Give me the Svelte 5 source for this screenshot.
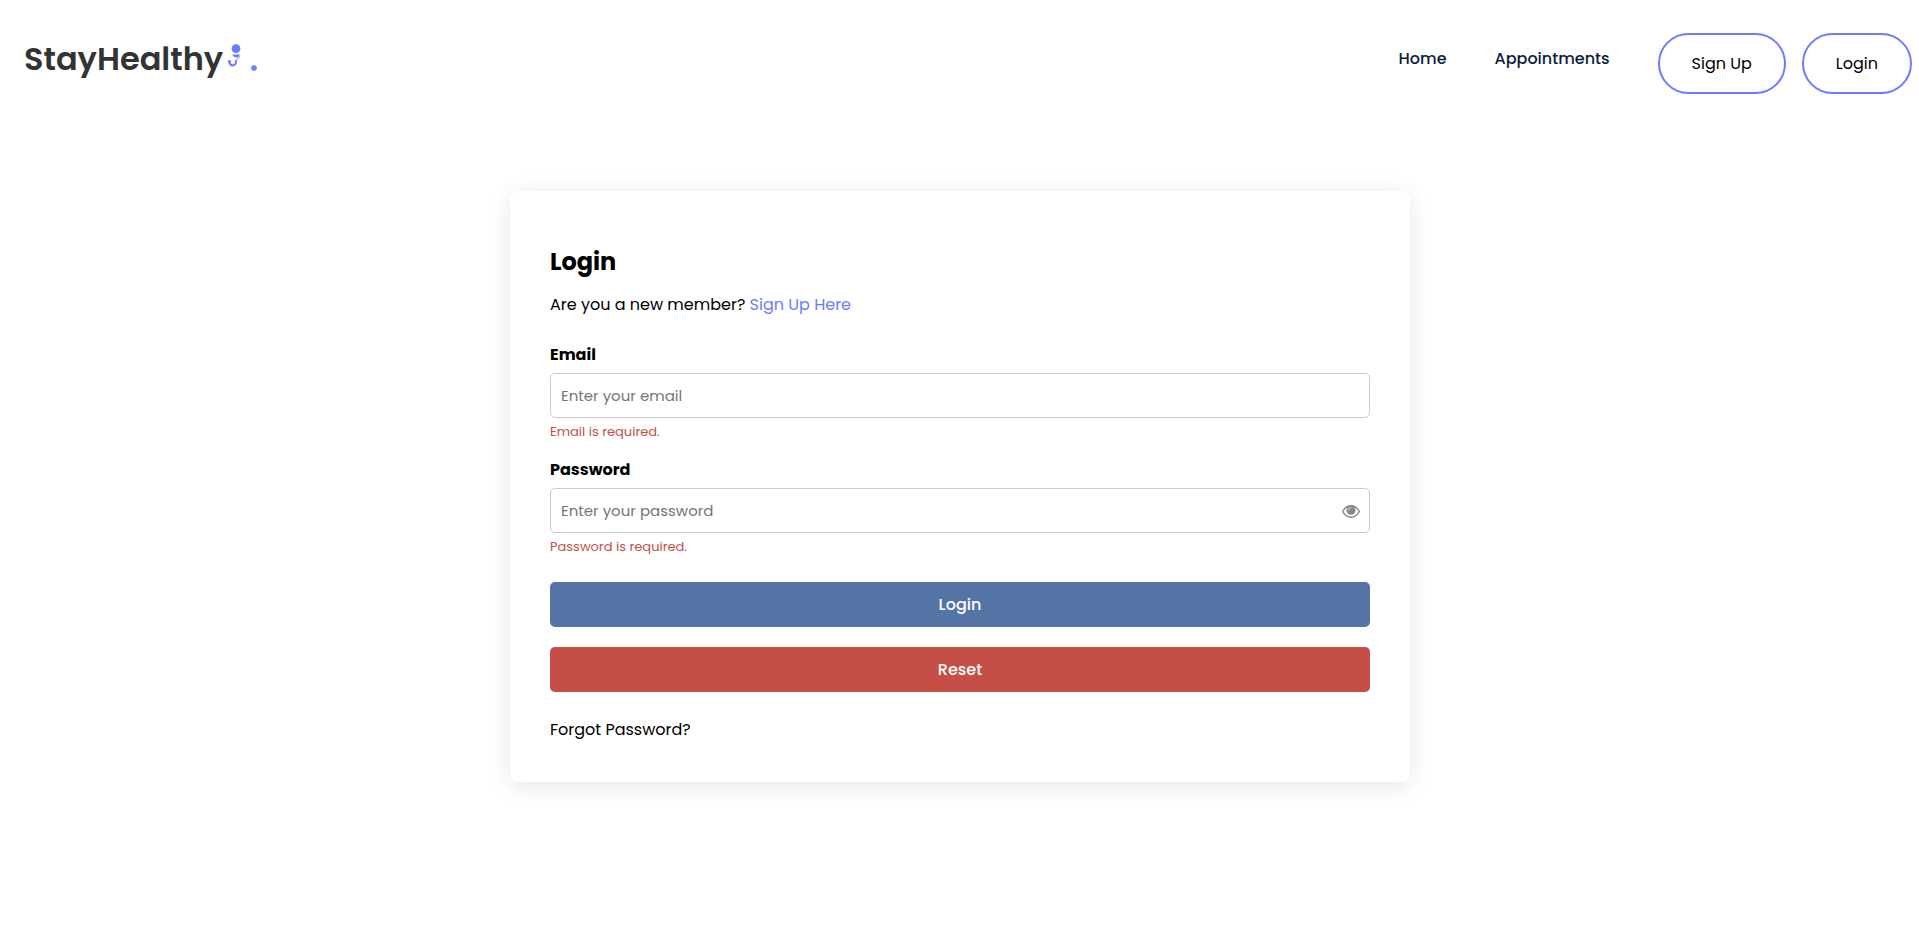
<script>
  let email = $state('');
  let password = $state('');
</script>

<div class="page">
  <header>
    <a class="logo" href="#home">
      <span class="brand">StayHealthy</span>
      <svg class="doctor" width="14" height="26" viewBox="0 0 14 26" aria-hidden="true">
        <circle cx="9" cy="4.7" r="4.4" fill="#6b7cff" />
        <path d="M5.200 10.600h7.800l-1.500 2.100q-2.300 1-4.600 0z" fill="#6b7cff" />
        <path d="M1 17.400h2.800M2.500 17.600c.2 2.600 1.400 3.800 3.200 3.800 2.100 0 3.300-1.700 3.500-4.900" fill="none" stroke="#6b7cff" stroke-width="2.100" />
        <path d="M8 16.600l1.800.2M9.400 16.500c.1-2.200 2.700-1.900 3.300-4.100M10.400 14l2.800-2.300" fill="none" stroke="#8b98ff" stroke-width="1" />
      </svg>
      <svg class="dot" width="6" height="6" viewBox="0 0 6 6" aria-hidden="true">
        <circle cx="3" cy="3" r="2.800" fill="#6b7cff" />
      </svg>
    </a>
    <nav>
      <a class="link" href="#home">Home</a>
      <a class="link" href="#appointments">Appointments</a>
      <button class="pill">Sign Up</button>
      <button class="pill">Login</button>
    </nav>
  </header>

  <main>
    <h2>Login</h2>
    <p class="member">Are you a new member? <a href="#signup">Sign Up Here</a></p>
    <form onsubmit={(e) => e.preventDefault()}>
      <label for="email">Email</label>
      <input id="email" type="text" placeholder="Enter your email" bind:value={email} />
      <div class="error">Email is required.</div>
      <label for="password">Password</label>
      <div class="field">
        <input id="password" type="password" placeholder="Enter your password" bind:value={password} />
        <svg class="eye" width="18" height="13" viewBox="0 0 18 13" aria-hidden="true">
          <path d="M.7 6.500C2.700 2.800 5.600.8 9 .8s6.300 2 8.300 5.700C15.300 10.200 12.400 12.200 9 12.200S2.700 10.200.7 6.500z" fill="none" stroke="#888" stroke-width="1.500" />
          <circle cx="9" cy="5.300" r="4.500" fill="#888" />
          <path d="M6.600 5.100c0-1.500 1-2.500 2.400-2.500" fill="none" stroke="#fff" stroke-width="0.800" stroke-linecap="round" />
        </svg>
      </div>
      <div class="error">Password is required.</div>
      <button class="btn submit" type="submit">Login</button>
      <button class="btn reset" type="reset">Reset</button>
    </form>
    <p class="forgot">Forgot Password?</p>
  </main>
</div>

<style>
  :global(body) {
    background: #fff;
    font-family: Poppins, Inter, 'Open Sans', sans-serif;
    font-size: 16px;
    line-height: 24px;
    color: #000;
  }
  .page { min-height: 943px; box-sizing: border-box; }
  a { text-decoration: none; }
  button, input { font-family: inherit; }
  header {
    display: flex;
    justify-content: space-between;
    align-items: flex-start;
    height: 191px;
    padding: 33px 7px 0 24px;
    box-sizing: border-box;
  }
  .logo { display: flex; align-items: flex-start; color: #333; }
  .brand {
    margin-top: 1px;
    font-size: 32px;
    font-weight: 600;
    line-height: 50px;
    white-space: nowrap;
  }
  .doctor { margin: 11px 0 0 4px; }
  .dot { margin: 31.5px 0 0 9.500px; }
  nav { display: flex; align-items: flex-start; }
  .link {
    margin: 14px 48px 0 0;
    color: #0b1b3d;
    font-weight: 500;
    white-space: nowrap;
  }
  .pill {
    height: 61px;
    padding: 0 32px;
    border: 2px solid #6b7cff;
    border-radius: 31px;
    background: #fff;
    color: #000;
    font-size: 16px;
    white-space: nowrap;
  }
  .pill + .pill { margin-left: 16px; }
  main {
    box-sizing: border-box;
    width: 900px;
    height: 591px;
    margin-left: calc(50% - 449.5px);
    padding: 53px 40px 0;
    border-radius: 8px;
    background: #fff;
    box-shadow: 0 4px 24px rgba(0, 0, 0, 0.1);
  }
  h2 { margin: 0 0 13px; font-size: 24px; line-height: 36px; font-weight: 700; }
  .member { margin: 0 0 26px; }
  .member a { color: #6b7cff; }
  label { display: block; font-weight: 700; margin-bottom: 6px; }
  input {
    display: block;
    box-sizing: border-box;
    width: 100%;
    height: 45px;
    padding: 0 10px;
    border: 1px solid #ccc;
    border-radius: 5px;
    background: #fff;
    font-size: 15px;
    outline: none;
  }
  input::placeholder { color: #757575; opacity: 1; }
  .error {
    margin: 4px 0 16px;
    color: #c54e46;
    font-size: 13px;
    line-height: 20px;
  }
  .field { position: relative; }
  .eye { position: absolute; right: 10px; top: 17px; }
  .btn {
    display: block;
    width: 100%;
    height: 45px;
    padding: 0;
    border: 0;
    border-radius: 5px;
    color: #fff;
    font-size: 16px;
    font-weight: 500;
  }
  .submit { margin: 25px 0 20px; background: #5574a6; }
  .reset { background: #c54e46; }
  .forgot { margin: 26px 0 0; }
</style>
